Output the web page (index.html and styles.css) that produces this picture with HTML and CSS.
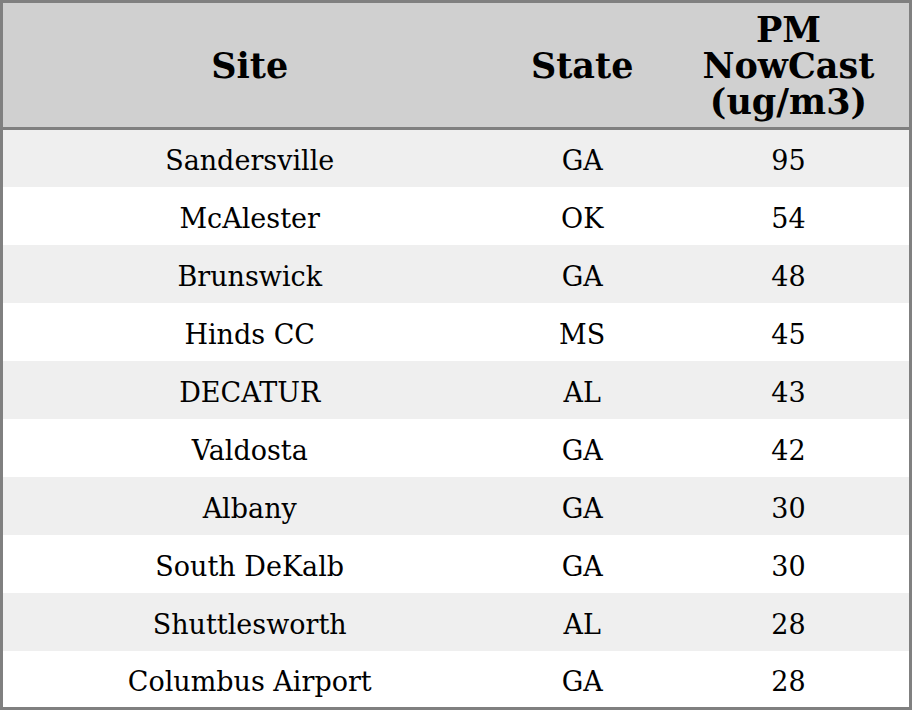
FILE: index.html
```html
<!DOCTYPE html>
<html>
<head>
<meta charset="utf-8">
<link rel="stylesheet" href="styles.css">
</head>
<body>
<table class="aq">
  <colgroup>
    <col class="c-site">
    <col class="c-state">
    <col class="c-pm">
  </colgroup>
  <thead>
    <tr><th>Site</th><th>State</th><th>PM<br>NowCast<br>(ug/m3)</th></tr>
  </thead>
  <tbody>
    <tr><td>Sandersville</td><td>GA</td><td>95</td></tr>
    <tr><td>McAlester</td><td>OK</td><td>54</td></tr>
    <tr><td>Brunswick</td><td>GA</td><td>48</td></tr>
    <tr><td>Hinds CC</td><td>MS</td><td>45</td></tr>
    <tr><td>DECATUR</td><td>AL</td><td>43</td></tr>
    <tr><td>Valdosta</td><td>GA</td><td>42</td></tr>
    <tr><td>Albany</td><td>GA</td><td>30</td></tr>
    <tr><td>South DeKalb</td><td>GA</td><td>30</td></tr>
    <tr><td>Shuttlesworth</td><td>AL</td><td>28</td></tr>
    <tr><td>Columbus Airport</td><td>GA</td><td>28</td></tr>
  </tbody>
</table>
</body>
</html>
```
FILE: styles.css
```css
html, body {
  margin: 0;
  padding: 0;
  background: #ffffff;
}
.aq {
  width: 912px;
  border-collapse: collapse;
  border: 3px solid #808080;
  font-family: "DejaVu Serif", serif;
  color: #000;
}
.c-site { width: 497px; }
.c-state { width: 172px; }
.c-pm { width: 243px; }
.aq th {
  background: #d0d0d0;
  font-weight: bold;
  font-size: 35px;
  line-height: 36px;
  padding: 9px 0 7px;
  border-bottom: 3px solid #808080;
  text-align: center;
}
.aq td {
  font-size: 27px;
  line-height: 30px;
  height: 58px;
  padding: 6px 0 0;
  text-align: center;
  box-sizing: border-box;
}
.aq tbody tr:nth-child(odd) { background: #efefef; }
.aq tbody tr:nth-child(even) { background: #ffffff; }
```
